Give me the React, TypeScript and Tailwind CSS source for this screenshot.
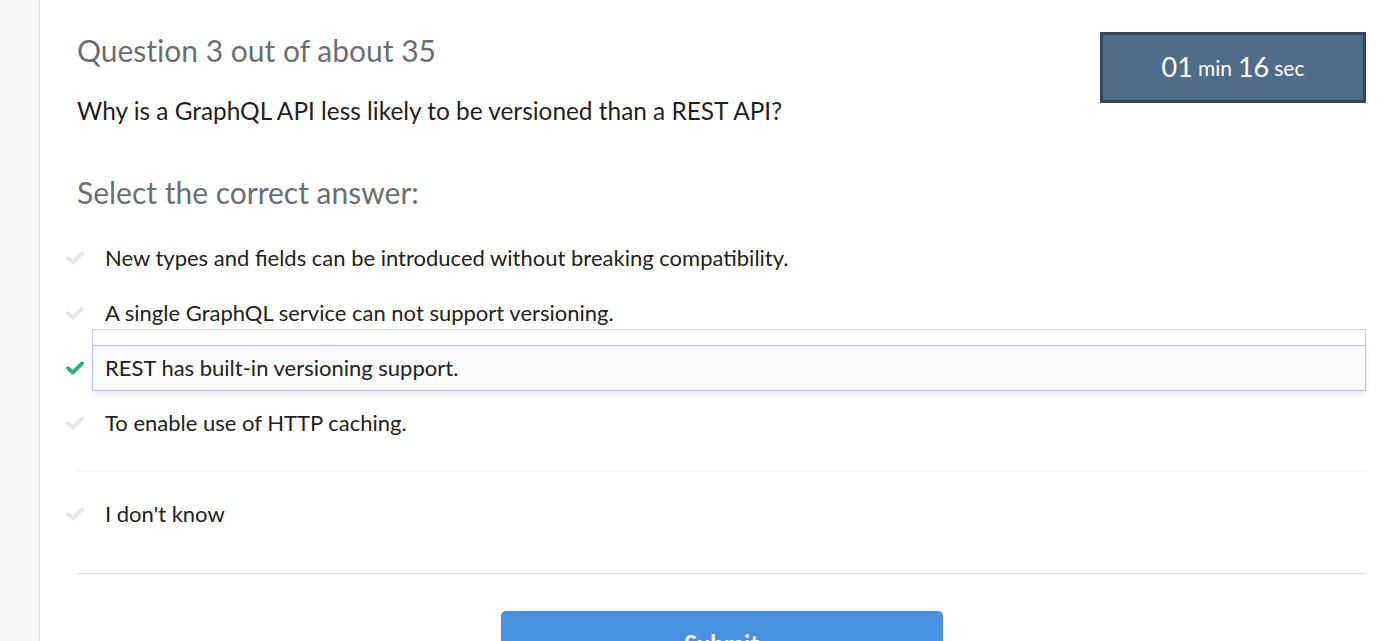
const options = [
  "New types and fields can be introduced without breaking compatibility.",
  "A single GraphQL service can not support versioning.",
  "REST has built-in versioning support.",
  "To enable use of HTTP caching.",
];

const selected = 2;

function Check({ active }: { active: boolean }) {
  return (
    <svg
      viewBox="0 0 18 14"
      className={`h-[14px] w-[18px] shrink-0 ${active ? "text-[#1eb47c]" : "text-[#e6e6e6]"}`}
    >
      <polyline
        points="2,7.2 6.8,11.6 16,2.4"
        fill="none"
        stroke="currentColor"
        strokeWidth="3.8"
        strokeLinejoin="round"
        strokeLinecap="round"
      />
    </svg>
  );
}

function OptionRow({ text, active }: { text: string; active: boolean }) {
  return (
    <div className="flex h-[55px] items-center">
      <Check active={active} />
      <div className="relative ml-[8px] flex-1">
        {active && (
          <div className="absolute -top-[16px] left-0 right-0 bottom-0 border border-[#cfcfcf] bg-white" />
        )}
        <div
          className={`relative flex h-[46px] items-center px-[12px] ${
            active
              ? "border border-[#a8c6f0] bg-[#fafbfd] shadow-[0_3px_6px_rgba(0,0,0,0.08)]"
              : "border border-transparent"
          }`}
        >
          <span className="text-[22px] text-[#222]">{text}</span>
        </div>
      </div>
    </div>
  );
}

export default function App() {
  return (
    <div
      className="flex h-[641px] w-full overflow-hidden bg-white"
      style={{ fontFamily: "Lato, 'Open Sans', sans-serif" }}
    >
      <aside className="w-[40px] shrink-0 border-r border-[#dedede] bg-[#f6f7f9]" />

      <main className="flex-1 pl-[37px] pr-[31px]">
        <div className="flex items-start justify-between">
          <div className="pt-[30px]">
            <h1 className="text-[30px] leading-[40px] text-[#6b6f73] [font-variant-ligatures:no-common-ligatures]">
              Question 3 out of about 35
            </h1>
            <p className="mt-[25px] text-[24.4px] leading-[32px] text-[#1f1f1f]">
              Why is a GraphQL API less likely to be versioned than a REST API?
            </p>
          </div>
          <div className="mt-[32px] flex h-[71px] w-[266px] items-center justify-center border-[3px] border-[#34475a] bg-[#4f6d89] text-white">
            <span className="text-[27px]">01</span>
            <span className="ml-[5px] text-[21px]">min</span>
            <span className="ml-[6px] text-[27px]">16</span>
            <span className="ml-[5px] text-[21px]">sec</span>
          </div>
        </div>

        <h2 className="mt-[45px] text-[30px] leading-[40px] text-[#6b6f73]">
          Select the correct answer:
        </h2>

        <div className="-ml-[11px] mt-[18px]">
          {options.map((o, i) => (
            <OptionRow key={o} text={o} active={i === selected} />
          ))}
        </div>

        <div className="mt-[21px] border-t border-[#f0f0f0]" />

        <div className="-ml-[11px] mt-[14px]">
          <OptionRow text="I don't know" active={false} />
        </div>

        <div className="mt-[32px] border-t border-[#dddddd]" />

        <div className="mt-[37px] flex justify-center">
          <button className="h-[60px] w-[442px] rounded-[5px] bg-[#4a90e2] pt-[6px] text-[24px] font-bold text-white">
            Submit
          </button>
        </div>
      </main>
    </div>
  );
}
